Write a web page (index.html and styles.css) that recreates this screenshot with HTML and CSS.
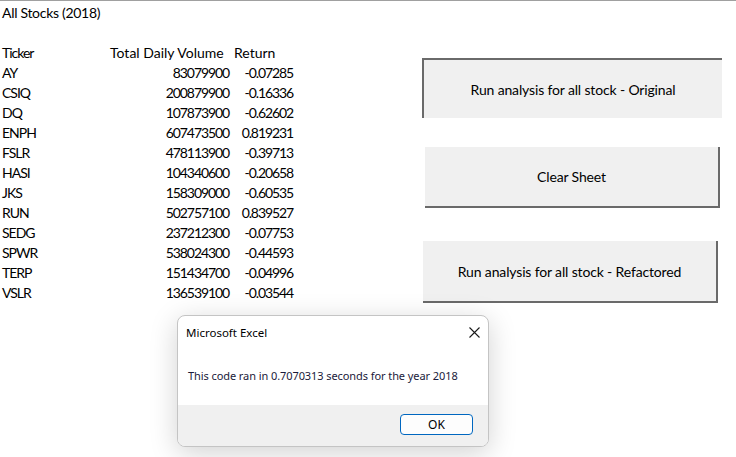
FILE: index.html
```html
<!DOCTYPE html>
<html>
<head>
<meta charset="utf-8">
<link rel="stylesheet" href="styles.css">
</head>
<body>
<div class="topline"></div>
<div class="page">
  <div class="sheet">
    <div class="cell title">All Stocks (2018)</div><div class="cell"></div><div class="cell"></div>
    <div class="cell"></div><div class="cell"></div><div class="cell"></div>
    <div class="cell tk">Ticker</div><div class="cell hdr">Total Daily Volume</div><div class="cell hdr">Return</div>
    <div class="cell tk">AY</div><div class="cell num">83079900</div><div class="cell num">-0.07285</div>
    <div class="cell tk">CSIQ</div><div class="cell num">200879900</div><div class="cell num">-0.16336</div>
    <div class="cell tk">DQ</div><div class="cell num">107873900</div><div class="cell num">-0.62602</div>
    <div class="cell tk">ENPH</div><div class="cell num">607473500</div><div class="cell num">0.819231</div>
    <div class="cell tk">FSLR</div><div class="cell num">478113900</div><div class="cell num">-0.39713</div>
    <div class="cell tk">HASI</div><div class="cell num">104340600</div><div class="cell num">-0.20658</div>
    <div class="cell tk">JKS</div><div class="cell num">158309000</div><div class="cell num">-0.60535</div>
    <div class="cell tk">RUN</div><div class="cell num">502757100</div><div class="cell num">0.839527</div>
    <div class="cell tk">SEDG</div><div class="cell num">237212300</div><div class="cell num">-0.07753</div>
    <div class="cell tk">SPWR</div><div class="cell num">538024300</div><div class="cell num">-0.44593</div>
    <div class="cell tk">TERP</div><div class="cell num">151434700</div><div class="cell num">-0.04996</div>
    <div class="cell tk">VSLR</div><div class="cell num">136539100</div><div class="cell num">-0.03544</div>
  </div>
  <div class="buttons">
    <div class="btn btn-orig">Run analysis for all stock - Original</div>
    <div class="btn btn-clear">Clear Sheet</div>
    <div class="btn btn-ref">Run analysis for all stock - Refactored</div>
  </div>
</div>
<div class="dialog">
  <div class="dlg-body">
    <div class="dlg-head">
      <span class="dlg-title">Microsoft Excel</span>
      <svg class="dlg-close" width="11" height="11" viewBox="0 0 11 11"><path d="M0.5 0.5 L10.5 10.5 M10.5 0.5 L0.5 10.5" stroke="#1a1a1a" stroke-width="1.1" fill="none"/></svg>
    </div>
    <div class="dlg-msg">This code ran in 0.7070313 seconds for the year 2018</div>
  </div>
  <div class="dlg-foot">
    <div class="ok">OK</div>
  </div>
</div>
</body>
</html>
```
FILE: styles.css
```css
html, body {
  margin: 0;
  padding: 0;
  background: #ffffff;
}
body {
  width: 736px;
  height: 457px;
  overflow: hidden;
  font-family: Lato, "Liberation Sans", sans-serif;
  font-size: 14px;
  color: #000;
}
.topline {
  height: 1px;
  background: #a0a0a0;
}
.page {
  display: flex;
}
.sheet {
  width: 422px;
  padding-top: 1px;
  display: grid;
  grid-template-columns: 108px 124px 64px;
  grid-auto-rows: 20px;
  align-content: start;
}
.cell {
  line-height: 21px;
  padding: 0 2px;
  white-space: nowrap;
  overflow: visible;
}
.cell.title {
  letter-spacing: -0.3px;
}
.cell.tk {
  letter-spacing: -1px;
}
.cell.hdr {
  padding-left: 2px;
}
.cell.num {
  text-align: right;
  padding-right: 3px;
  letter-spacing: -1.1px;
}
.buttons {
  display: flex;
  flex-direction: column;
  align-items: flex-start;
}
.btn {
  box-sizing: border-box;
  background: #f0f0f0;
  display: flex;
  align-items: center;
  justify-content: center;
  font-size: 14px;
  letter-spacing: -0.15px;
}
.btn-orig {
  margin-top: 57px;
  width: 300px;
  height: 60px;
  border-top: 2px solid #6a6a6a;
  border-left: 2px solid #6a6a6a;
}
.btn-clear {
  margin-top: 29px;
  margin-left: 3px;
  width: 295px;
  height: 61px;
  border-right: 2px solid #6a6a6a;
  border-bottom: 2px solid #6a6a6a;
}
.btn-ref {
  margin-top: 33px;
  margin-left: 1px;
  width: 295px;
  height: 62px;
  border-right: 2px solid #6a6a6a;
  border-bottom: 2px solid #6a6a6a;
}
.dialog {
  position: absolute;
  left: 177px;
  top: 315px;
  width: 312px;
  height: 132px;
  box-sizing: border-box;
  border: 1px solid #c4c4c4;
  border-radius: 8px;
  background: #ffffff;
  overflow: hidden;
  box-shadow: 0 6px 28px rgba(0, 0, 0, 0.18);
  display: flex;
  flex-direction: column;
  font-family: "Noto Sans", "Open Sans", sans-serif;
  font-size: 11px;
}
.dlg-body {
  height: 89px;
}
.dlg-head {
  display: flex;
  align-items: center;
  justify-content: space-between;
  padding: 8px 8px 0 8px;
  height: 16px;
}
.dlg-title {
  font-size: 11.5px;
}
.dlg-msg {
  margin-top: 28px;
  padding-left: 10px;
  color: #1a1a3a;
  letter-spacing: -0.08px;
}
.dlg-foot {
  flex: 1;
  background: #f0f0f0;
  display: flex;
  justify-content: flex-end;
  align-items: flex-start;
  padding: 9px 15px 0 0;
}
.ok {
  box-sizing: border-box;
  width: 73px;
  height: 21px;
  border: 1px solid #0067c0;
  border-radius: 4px;
  background: #fdfdfd;
  display: flex;
  align-items: center;
  justify-content: center;
  font-size: 12px;
}
```
